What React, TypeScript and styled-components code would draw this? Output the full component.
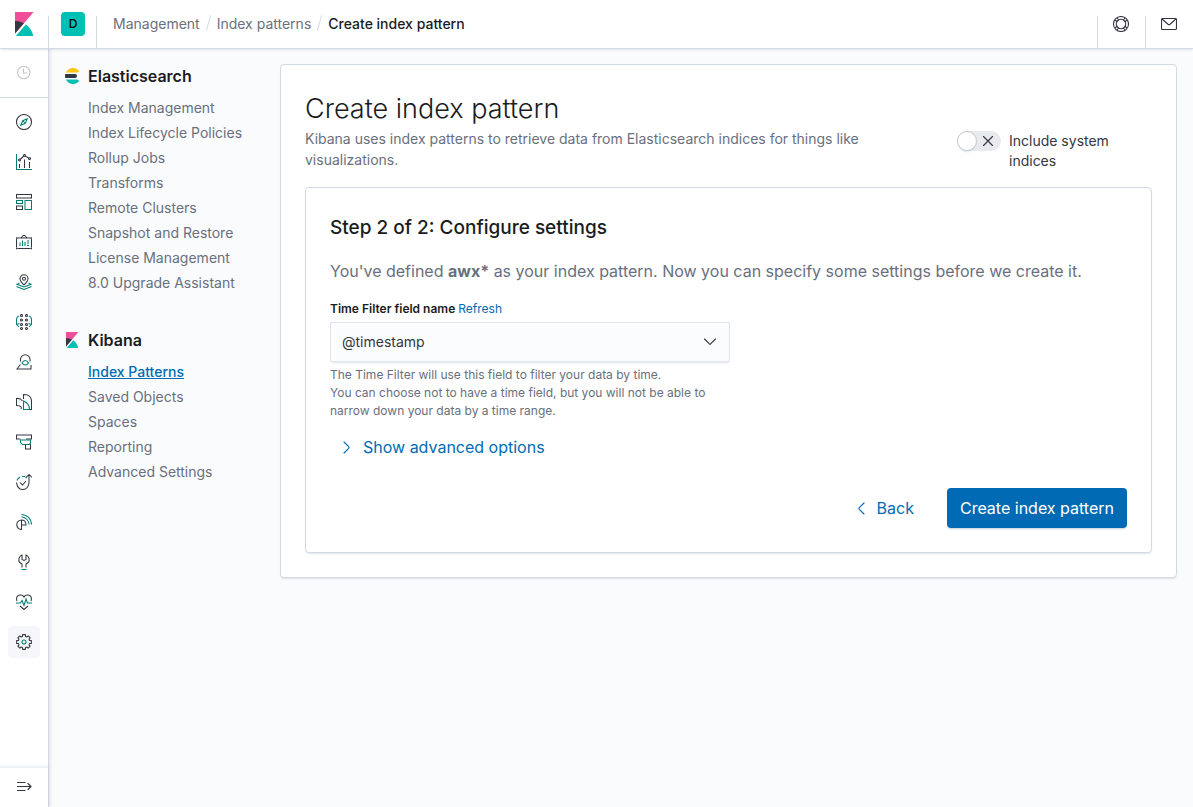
import React, { ReactNode, useState } from "react";
import styled, { createGlobalStyle, css } from "styled-components";

const color = {
  title: "#1a1c21",
  text: "#343741",
  subdued: "#69707d",
  primary: "#006bb4",
  accent: "#017d73",
  border: "#d3dae6",
  page: "#fafbfd",
  teal: "#00bfb3",
};

const GlobalStyle = createGlobalStyle`
  *, *::before, *::after { box-sizing: border-box; }
  body {
    margin: 0;
    background: ${color.page};
    color: ${color.text};
    font-family: Inter, "Liberation Sans", sans-serif;
    font-size: 14px;
    line-height: 21px;
  }
  h1, h2, p, ul, ol { margin: 0; padding: 0; }
  ul, ol { list-style: none; }
  a { color: inherit; text-decoration: none; }
  button, input, select { font: inherit; color: inherit; margin: 0; }
  svg { display: block; flex: none; }
`;

const Shell = styled.div`
  display: grid;
  grid-template: 49px minmax(0, 1fr) / 49px minmax(0, 1fr);
  min-height: 100vh;
`;

const Header = styled.header`
  grid-column: 1 / -1;
  display: flex;
  align-items: stretch;
  position: relative;
  z-index: 2;
  background: #fff;
  border-bottom: 1px solid ${color.border};
  box-shadow: 0 2px 2px -1px rgba(152, 162, 179, 0.3);
`;

const separator = css`
  background: linear-gradient(${color.border}, ${color.border}) left bottom / 1px 32px no-repeat;
`;

const HeaderCell = styled.div<{ $divided?: boolean }>`
  display: flex;
  align-items: center;
  justify-content: center;
  width: 48px;
  ${(p) => p.$divided && separator}
`;

const SpaceCell = styled(HeaderCell)`
  padding-left: 2px;
`;

const HeaderButton = styled.button`
  display: grid;
  place-items: center;
  width: 100%;
  height: 48px;
  padding: 0;
  border: 0;
  background: none;
  cursor: pointer;
`;

const HeaderEnd = styled.div`
  display: flex;
  margin-left: auto;
`;

const Avatar = styled.span`
  display: grid;
  place-items: center;
  width: 24px;
  height: 24px;
  border-radius: 4px;
  background: ${color.teal};
  color: #000;
  font-size: 12px;
  font-weight: 500;
  line-height: 24px;
`;

const Breadcrumbs = styled.nav`
  display: flex;
  align-items: center;
  padding: 0 0 2px 17px;
  ${separator}
  color: ${color.subdued};
  ol { display: flex; align-items: center; }
  li { display: flex; align-items: center; }
  li + li::before {
    content: "";
    width: 1px;
    height: 16px;
    margin: 0 8px;
    background: ${color.border};
    transform: rotate(15deg);
  }
`;

const CurrentCrumb = styled.span`
  color: ${color.title};
  font-weight: 500;
`;

const Rail = styled.nav`
  display: flex;
  flex-direction: column;
  position: sticky;
  top: 49px;
  height: calc(100vh - 49px);
  background: #fff;
  border-right: 1px solid ${color.border};
  box-shadow: 1px 0 3px rgba(152, 162, 179, 0.3);
`;

const RailTop = styled.div`
  display: grid;
  place-items: center;
  height: 49px;
  border-bottom: 1px solid ${color.border};
`;

const RailList = styled.ul`
  display: grid;
  justify-content: center;
  gap: 8px;
  padding-top: 8px;
`;

const RailLink = styled.a<{ $active?: boolean }>`
  display: grid;
  place-items: center;
  width: 32px;
  height: 32px;
  border-radius: 4px;
  background: ${(p) => (p.$active ? "#f5f7fa" : "transparent")};
`;

const RailBottom = styled.div`
  margin-top: auto;
  height: 40px;
  padding-bottom: 2px;
  display: grid;
  place-items: center;
  border-top: 1px solid #eef0f4;
  box-shadow: 0 -1px 3px rgba(152, 162, 179, 0.2);
`;

const RailButton = styled.button`
  display: grid;
  place-items: center;
  width: 32px;
  height: 32px;
  padding: 0;
  border: 0;
  background: none;
  cursor: pointer;
`;

const Page = styled.div`
  display: flex;
  align-items: flex-start;
  gap: 24px;
  padding: 15px 16px 16px 15px;
`;

const SideNav = styled.nav`
  display: grid;
  gap: 33px;
  flex: none;
  width: 192px;
`;

const SideHeading = styled.h2`
  display: flex;
  align-items: center;
  gap: 8px;
  color: ${color.title};
  font-size: 16px;
  font-weight: 600;
  line-height: 24px;
`;

const SideList = styled.ul`
  padding: 7px 0 0 24px;
`;

const SideLink = styled.a<{ $active?: boolean }>`
  display: block;
  line-height: 25px;
  color: ${(p) => (p.$active ? color.primary : color.subdued)};
  font-weight: ${(p) => (p.$active ? 500 : 400)};
  text-decoration: ${(p) => (p.$active ? "underline" : "none")};
`;

const Panel = styled.section`
  flex: 1;
  min-width: 0;
  padding: 24px;
  background: #fff;
  border: 1px solid ${color.border};
  border-radius: 4px;
  box-shadow: 0 2px 2px -1px rgba(152, 162, 179, 0.3);
`;

const Intro = styled.div`
  display: grid;
  grid-template-columns: minmax(0, 1fr) 195px;
  align-items: end;
  gap: 24px;
  margin-bottom: 16px;
`;

const PageTitle = styled.h1`
  color: ${color.title};
  font-size: 27px;
  font-weight: 300;
  line-height: 40px;
`;

const Lead = styled.p`
  margin: -1px 0 1px;
  color: ${color.subdued};
`;

const SwitchLabel = styled.label`
  display: flex;
  align-items: flex-start;
  gap: 8px;
  line-height: 20px;
  cursor: pointer;
`;

const SwitchTrack = styled.span`
  position: relative;
  flex: none;
  width: 44px;
  height: 20px;
  border-radius: 10px;
  background: #e9eaee;
  svg {
    position: absolute;
    top: 2px;
    right: 5px;
  }
`;

const SwitchThumb = styled.span`
  position: absolute;
  top: 0;
  left: 0;
  width: 20px;
  height: 20px;
  border: 1px solid #c5c8cd;
  border-radius: 50%;
  background: #fff;
  box-shadow: 0 2px 2px -1px rgba(152, 162, 179, 0.3);
`;

const SwitchInput = styled.input`
  position: absolute;
  inset: 0;
  z-index: 1;
  width: 100%;
  height: 100%;
  opacity: 0;
  cursor: pointer;
  &:checked ~ ${SwitchThumb} { left: 24px; }
`;

const StepTitle = styled.h2`
  color: ${color.title};
  font-size: 19px;
  font-weight: 500;
  line-height: 32px;
`;

const StepText = styled.p`
  margin: 15px 0 17px;
  color: ${color.subdued};
  font-size: 16px;
  line-height: 24px;
`;

const Field = styled.div`
  max-width: 400px;
  font-size: 12px;
  line-height: 18px;
`;

const FieldHead = styled.div`
  display: flex;
  gap: 3px;
  margin-bottom: 4px;
  label { color: ${color.title}; font-weight: 600; }
`;

const InlineButton = styled.button`
  padding: 0;
  border: 0;
  background: none;
  color: ${color.primary};
  cursor: pointer;
`;

const SelectBox = styled.div`
  position: relative;
  svg {
    position: absolute;
    top: 12px;
    right: 12px;
    pointer-events: none;
  }
`;

const Select = styled.select`
  display: block;
  width: 100%;
  height: 40px;
  padding: 0 40px 0 11px;
  appearance: none;
  border: 1px solid #e0e5ee;
  border-radius: 0;
  background: #fbfcfd;
  box-shadow: 0 3px 2px -2px rgba(152, 162, 179, 0.3);
  font-size: 14px;
`;

const Help = styled.div`
  padding-top: 4px;
  color: ${color.subdued};
`;

const TextButton = styled.button`
  display: inline-flex;
  align-items: center;
  gap: 8px;
  height: 40px;
  padding: 0 9px;
  border: 0;
  background: none;
  color: ${color.primary};
  font-size: 16px;
  cursor: pointer;
`;

const FillButton = styled.button`
  height: 40px;
  padding: 0 13px;
  border: 0;
  border-radius: 4px;
  background: ${color.primary};
  box-shadow: 0 2px 2px -1px rgba(54, 97, 126, 0.3);
  color: #fff;
  font-size: 16px;
  cursor: pointer;
`;

const Advanced = styled.div`
  display: flex;
  margin: 7px 0 21px;
`;

const Actions = styled.div`
  display: flex;
  justify-content: flex-end;
  gap: 24px;
`;

/* Icons */

const KibanaLogo = ({ size }: { size: number }) => (
  <svg width={size} height={size} viewBox="0 0 32 32" aria-hidden="true">
    <path fill="#f04e98" d="M4 0v28.789L28.935.017z" />
    <path fill="#343741" d="M4 12v16.789l11.906-13.738A24.721 24.721 0 004 12z" />
    <path fill="#00bfb3" d="M18.479 16.664L6.268 30.754l-1.073 1.237h23.191c-1.252-6.292-4.883-11.719-9.908-15.327z" />
  </svg>
);

const ElasticsearchLogo = () => (
  <svg width="16" height="16" viewBox="0 0 32 32" aria-hidden="true">
    <path fill="#343741" d="M2 16c0 1.384.194 2.72.524 4H22a4 4 0 000-8H2.524A15.984 15.984 0 002 16z" />
    <path fill="#fec514" d="M28.924 7.662A15.381 15.381 0 0030.48 6C27.547 2.346 23.05 0 18 0 11.679 0 6.239 3.678 3.644 9H25.51a5.039 5.039 0 003.413-1.338z" />
    <path fill="#00bfb3" d="M25.51 23H3.645C6.24 28.323 11.679 32 18 32c5.05 0 9.547-2.346 12.48-6a15.381 15.381 0 00-1.556-1.662A5.034 5.034 0 0025.51 23z" />
  </svg>
);

const Glyph = ({ d, stroke = "currentColor" }: { d: string; stroke?: string }) => (
  <svg width="16" height="16" viewBox="0 0 16 16" fill="none" stroke={stroke} strokeWidth="1.15" strokeLinecap="round" strokeLinejoin="round" aria-hidden="true">
    <path d={d} />
  </svg>
);

const AppIcon = ({ children }: { children: ReactNode }) => (
  <svg width="16" height="16" viewBox="0 0 32 32" fill="none" stroke={color.text} strokeWidth="2.1" aria-hidden="true">
    {children}
  </svg>
);

const T = ({ d }: { d: string }) => <path d={d} stroke={color.accent} />;

const gearPath = () => {
  const points: string[] = [];
  const teeth = 8;
  for (let i = 0; i < teeth; i++) {
    const mid = (i * 2 * Math.PI) / teeth;
    [[-0.27, 11.5], [-0.19, 15], [0.19, 15], [0.27, 11.5]].forEach(([offset, radius]) => {
      const x = 16 + radius * Math.sin(mid + offset);
      const y = 16 - radius * Math.cos(mid + offset);
      points.push(`${x.toFixed(2)} ${y.toFixed(2)}`);
    });
  }
  return `M${points.join("L")}Z`;
};

const apps: { name: string; icon: ReactNode }[] = [
  { name: "Discover", icon: <><circle cx="16" cy="16" r="15" /><T d="M22.5 9.5L18.5 18.5L9.5 22.5L13.5 13.5ZM13.5 13.5L18.5 18.5" /></> },
  { name: "Visualize", icon: <><T d="M1 0V31H32" /><path d="M7 20V28M17 11V28M27 16V28M8.700 10.500L15.300 4.500M18.900 4.200L25 7.900" /><circle cx="7" cy="12" r="2" /><circle cx="17" cy="3" r="2" /><circle cx="27" cy="9" r="2" /></> },
  { name: "Dashboard", icon: <><path d="M1 1H31V8H1ZM1 24H13V31H1Z" /><T d="M1 13H13V19H1ZM18 13H31V31H18Z" /></> },
  { name: "Canvas", icon: <><path d="M3 8H29M1 10V27M31 10V27M3 29H29M10 8L14.500 3H17.500L22 8" /><path d="M0 8H3M29 8H32M0 29H3M29 29H32" strokeWidth="3" /><T d="M8 17V24M13 13V24M18 16V24M22 14H26M22 18H26M22 23H26" /></> },
  { name: "Maps", icon: <><path d="M16 22C12 18 8 14 8 9.500A8 8 0 0124 9.500C24 14 20 18 16 22Z" /><circle cx="16" cy="9.500" r="3" /><T d="M7 18L2 20.500L16 26L30 20.500L25 18M1 25L16 31L31 25" /></> },
  { name: "Machine Learning", icon: <><circle cx="11" cy="3" r="2" /><circle cx="21" cy="3" r="2" /><circle cx="11" cy="12" r="2" /><circle cx="21" cy="12" r="2" /><circle cx="11" cy="21" r="2" /><circle cx="21" cy="21" r="2" /><circle cx="11" cy="29" r="2" /><circle cx="21" cy="29" r="2" /><T d="M6 4C3 5 1 8 1 11V21L6 26M26 4C29 5 31 8 31 11V21L26 26M1 21L7 19M31 21L25 19" /></> },
  { name: "Metrics", icon: <><path d="M9 15V11A9.500 9.500 0 0128 11V15M9 21L2 30H30V22" /><T d="M12 18C14 14.500 16 13 18.500 13S23 14.500 25 18C23 21 21 22 18.500 22S14 21 12 18Z" /></> },
  { name: "Logs", icon: <><path d="M10 30C12 25 8 23 1 23V9C6 8 10 10 13 14M15 10V1C25 1 31 6 31 14V31H27" /><T d="M15 14V31H27C27 22 22 17 15 14Z" /></> },
  { name: "APM", icon: <><path d="M9 10H1V2H31V10H20M19 22V30H29V21H27" /><T d="M9 12H29V17C29 19 27 21 25 21H13L9 17Z" /></> },
  { name: "Uptime", icon: <><path d="M1 17C2 25 7 31 14 31S26 25 26 17V2M20 7L26 1L32 7M8 17L13 22L20 14" /><T d="M2 13C3 10 5 8 8 6M12 5H18M19 6L22 8" /></> },
  { name: "SIEM", icon: <><path d="M11 12A9.500 9.500 0 0011 31V12C17 12 20 16 20 22H11" /><T d="M11 1C22 1 31 10 31 21M11 6C19 6 26 13 26 21" /></> },
  { name: "Dev Tools", icon: <><path d="M12 27V20C7 18 5 14 6 9C7 5 9 3 12 2V11L16 13L20 11V2C23 3 25 5 26 9C27 14 25 18 20 20V27" /><T d="M11 31H21" /></> },
  { name: "Stack Monitoring", icon: <><path d="M2 14C-1 5 5 1 10 2C13 2 15 4 16 6C17 4 19 2 22 2C27 1 33 5 30 14M8 24L16 31L24 24" /><T d="M0 18H9L12 13L16 23L20 10L23 18H32" /></> },
  { name: "Management", icon: <><path d={gearPath()} strokeLinejoin="round" /><circle cx="16" cy="16" r="4" stroke={color.accent} /></> },
];

const sections: { title: string; logo: ReactNode; links: string[] }[] = [
  {
    title: "Elasticsearch",
    logo: <ElasticsearchLogo />,
    links: ["Index Management", "Index Lifecycle Policies", "Rollup Jobs", "Transforms", "Remote Clusters", "Snapshot and Restore", "License Management", "8.0 Upgrade Assistant"],
  },
  {
    title: "Kibana",
    logo: <KibanaLogo size={16} />,
    links: ["Index Patterns", "Saved Objects", "Spaces", "Reporting", "Advanced Settings"],
  },
];

export default function App() {
  const [includeSystem, setIncludeSystem] = useState(false);
  return (
    <>
      <GlobalStyle />
      <Shell>
        <Header>
          <HeaderCell>
            <a href="#home" aria-label="Home"><KibanaLogo size={24} /></a>
          </HeaderCell>
          <SpaceCell $divided>
            <HeaderButton aria-label="Default space"><Avatar>D</Avatar></HeaderButton>
          </SpaceCell>
          <Breadcrumbs aria-label="Breadcrumbs">
            <ol>
              <li><a href="#management">Management</a></li>
              <li><a href="#patterns">Index patterns</a></li>
              <li><CurrentCrumb aria-current="page">Create index pattern</CurrentCrumb></li>
            </ol>
          </Breadcrumbs>
          <HeaderEnd>
            <HeaderCell $divided>
              <HeaderButton aria-label="Help">
                <AppIcon>
                  <circle cx="16" cy="16" r="15" />
                  <circle cx="16" cy="16" r="9.5" />
                  <path d="M4 8L9 12M8 4L12 9M28 8L23 12M24 4L20 9M4 24L9 20M8 28L12 23M28 24L23 20M24 28L20 23" />
                </AppIcon>
              </HeaderButton>
            </HeaderCell>
            <HeaderCell $divided>
              <HeaderButton aria-label="Newsfeed">
                <Glyph stroke={color.text} d="M1.500 2.500H14.500Q15.500 2.500 15.500 3.500V12.500Q15.500 13.500 14.500 13.500H1.500Q.5 13.500 .5 12.500V3.500Q.5 2.500 1.500 2.500ZM1 3L7 8.200Q8 9 9 8.200L15 3" />
              </HeaderButton>
            </HeaderCell>
          </HeaderEnd>
        </Header>

        <Rail aria-label="Applications">
          <RailTop>
            <RailButton aria-label="Recently viewed">
              <Glyph stroke="#c2c3c6" d="M14 7.500A6.250 6.250 0 111.500 7.500A6.250 6.250 0 0114 7.500M7.500 4V8H11" />
            </RailButton>
          </RailTop>
          <RailList>
            {apps.map(({ name, icon }) => (
              <li key={name}>
                <RailLink href="#app" aria-label={name} $active={name === "Management"}>
                  <AppIcon>{icon}</AppIcon>
                </RailLink>
              </li>
            ))}
          </RailList>
          <RailBottom>
            <RailButton aria-label="Expand navigation">
              <Glyph stroke={color.text} d="M1.500 3.500H9M1.500 7.500H15M1.500 11.500H9M12 4.500L15 7.500L12 10.500" />
            </RailButton>
          </RailBottom>
        </Rail>

        <Page>
          <SideNav aria-label="Management">
            {sections.map((section) => (
              <div key={section.title}>
                <SideHeading>{section.logo}{section.title}</SideHeading>
                <SideList>
                  {section.links.map((link) => (
                    <li key={link}>
                      <SideLink href="#section" $active={link === "Index Patterns"}>{link}</SideLink>
                    </li>
                  ))}
                </SideList>
              </div>
            ))}
          </SideNav>

          <Panel as="main">
            <Intro>
              <div>
                <PageTitle>Create index pattern</PageTitle>
                <Lead>Kibana uses index patterns to retrieve data from Elasticsearch indices for things like visualizations.</Lead>
              </div>
              <SwitchLabel htmlFor="include-system">
                <SwitchTrack>
                  <SwitchInput id="include-system" type="checkbox" role="switch" checked={includeSystem} onChange={(e) => setIncludeSystem(e.target.checked)} />
                  <SwitchThumb />
                  <Glyph d="M3.500 3.500L12.500 12.500M12.500 3.500L3.500 12.500" />
                </SwitchTrack>
                <span>Include system indices</span>
              </SwitchLabel>
            </Intro>

            <Panel>
              <StepTitle>Step 2 of 2: Configure settings</StepTitle>
              <StepText>
                You've defined <strong>awx*</strong> as your index pattern. Now you can specify some settings before we create it.
              </StepText>
              <Field>
                <FieldHead>
                  <label htmlFor="time-field">Time Filter field name</label>
                  <InlineButton type="button">Refresh</InlineButton>
                </FieldHead>
                <SelectBox>
                  <Select id="time-field" defaultValue="@timestamp" aria-describedby="time-field-help">
                    <option>@timestamp</option>
                  </Select>
                  <Glyph d="M2.500 5L7.200 9.700Q8 10.400 8.800 9.700L13.500 5" />
                </SelectBox>
                <Help id="time-field-help">
                  <p>The Time Filter will use this field to filter your data by time.</p>
                  <p>You can choose not to have a time field, but you will not be able to narrow down your data by a time range.</p>
                </Help>
              </Field>
              <Advanced>
                <TextButton type="button">
                  <Glyph d="M5 3L9.700 7.700Q10.400 8.500 9.700 9.300L5 14" />
                  Show advanced options
                </TextButton>
              </Advanced>
              <Actions>
                <TextButton type="button">
                  <Glyph d="M11 3L6.300 7.700Q5.600 8.500 6.300 9.300L11 14" />
                  Back
                </TextButton>
                <FillButton type="button">Create index pattern</FillButton>
              </Actions>
            </Panel>
          </Panel>
        </Page>
      </Shell>
    </>
  );
}
